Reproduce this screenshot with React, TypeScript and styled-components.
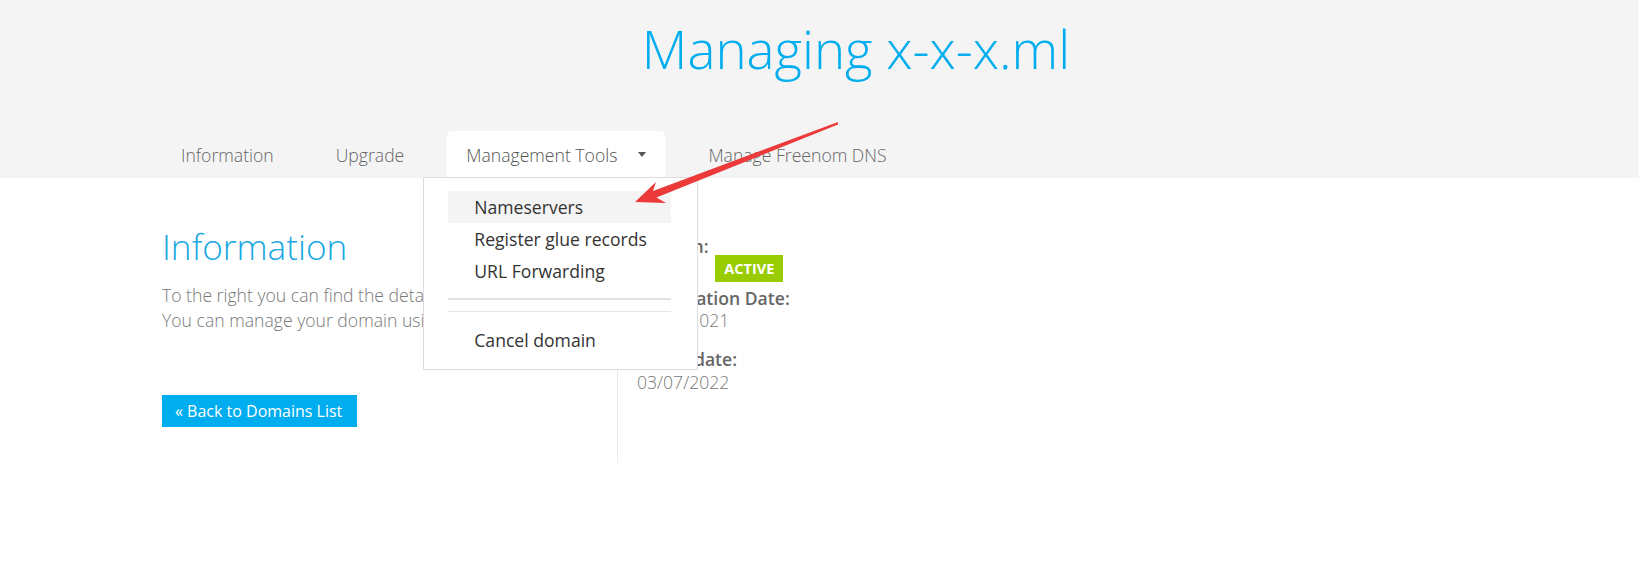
import React from "react";
import styled, { createGlobalStyle } from "styled-components";

const GlobalStyle = createGlobalStyle`
  html, body {
    margin: 0;
    padding: 0;
    background: #ffffff;
    font-family: "Open Sans", "Liberation Sans", sans-serif;
  }
  #root {
    position: relative;
    min-height: 572px;
  }
`;

const tabs = [
  { label: "Information" },
  { label: "Upgrade" },
  { label: "Management Tools", active: true, caret: true },
  { label: "Manage Freenom DNS" },
];

const menuItems = ["Nameservers", "Register glue records", "URL Forwarding"];

const App = (): React.ReactElement => {
  return (
    <>
      <GlobalStyle />
      <Header>
        <Container>
          <Title>Managing x-x-x.ml</Title>
          <Tabs>
            {tabs.map((tab) => (
              <Tab key={tab.label} $active={tab.active}>
                {tab.label}
                {tab.caret && <Caret />}
                {tab.active && (
                  <Dropdown>
                    {menuItems.map((item, index) => (
                      <MenuItem key={item} $hover={index === 0}>
                        {item}
                      </MenuItem>
                    ))}
                    <Divider $thick />
                    <Divider />
                    <MenuItem $spaced>Cancel domain</MenuItem>
                  </Dropdown>
                )}
              </Tab>
            ))}
          </Tabs>
        </Container>
      </Header>
      <Container>
        <Row>
          <LeftCol>
            <Heading>Information</Heading>
            <Text>
              To the right you can find the details of your domain.
              <br />
              You can manage your domain using the tabs above.
            </Text>
            <BackButton>« Back to Domains List</BackButton>
          </LeftCol>
          <RightCol>
            <Label>Domain:</Label>
            <DomainRow>
              <Value>x-x-x.ml</Value>
              <Badge>Active</Badge>
            </DomainRow>
            <Label $gap={6}>Registration Date:</Label>
            <Value>03/07/2021</Value>
            <Label $gap={18}>Expiry date:</Label>
            <Value $gap={1}>03/07/2022</Value>
          </RightCol>
        </Row>
      </Container>
      <Arrow viewBox="0 0 1639 572">
        <polygon
          points="838,122 653,191 656,182 635,202 666,203 656.5,197.5 838,124.5"
          fill="#ec3a3a"
        />
      </Arrow>
    </>
  );
};

const Header = styled.div`
  background: #f4f4f4;
  height: 178px;
`;

const Container = styled.div`
  width: 1388px;
  margin-left: 162px;
`;

const Title = styled.h1`
  margin: 0;
  padding-top: 13px;
  font-size: 52.8px;
  line-height: 72px;
  font-weight: 300;
  color: #00adef;
  text-align: center;
`;

const Tabs = styled.ul`
  list-style: none;
  margin: 46px 0 0;
  padding: 0;
  display: flex;
  gap: 24px;
`;

const Tab = styled.li<{ $active?: boolean }>`
  position: relative;
  display: flex;
  align-items: center;
  height: 47px;
  padding: 0 19px;
  font-size: 17.6px;
  font-weight: 300;
  color: ${(p) => (p.$active ? "#555" : "#666")};
  background: ${(p) => (p.$active ? "#ffffff" : "transparent")};
  border-radius: 5px 5px 0 0;
`;

const Caret = styled.span`
  margin-left: 21px;
  width: 0;
  height: 0;
  border-left: 4.5px solid transparent;
  border-right: 4.5px solid transparent;
  border-top: 5px solid #555;
`;

const Dropdown = styled.ul`
  position: absolute;
  left: -24px;
  top: 46px;
  width: 275px;
  margin: 0;
  padding: 13px 26px 13px 24px;
  box-sizing: border-box;
  list-style: none;
  background: #ffffff;
  border: 1px solid #dcdcdc;
  z-index: 2;
`;

const MenuItem = styled.li<{ $hover?: boolean; $spaced?: boolean }>`
  height: 32px;
  line-height: 32px;
  margin-top: ${(p) => (p.$spaced ? "12px" : "0")};
  padding-left: 26px;
  font-size: 17.6px;
  font-weight: 400;
  color: #333;
  background: ${(p) => (p.$hover ? "#f4f4f4" : "transparent")};
  white-space: nowrap;
`;

const Divider = styled.li<{ $thick?: boolean }>`
  margin: 11px 0 0;
  height: 0;
  border-top: ${(p) => (p.$thick ? "2px solid #e2e2e2" : "1px solid #e6e6e6")};
`;

const Row = styled.div`
  display: flex;
  margin-top: 37px;
  height: 248px;
`;

const LeftCol = styled.div`
  width: 455px;
  padding-top: 7px;
  border-right: 1px solid #ececec;
`;

const Heading = styled.h2`
  margin: 0;
  font-size: 35.2px;
  line-height: 48px;
  font-weight: 300;
  color: #17a8e3;
`;

const Text = styled.p`
  margin: 13px 0 0;
  font-size: 17.6px;
  line-height: 25px;
  font-weight: 300;
  color: #777;
  white-space: nowrap;
`;

const BackButton = styled.button`
  display: block;
  margin-top: 62px;
  width: 195px;
  height: 32px;
  padding: 0 0 0 13px;
  border: none;
  background: #00adef;
  color: #ffffff;
  font-family: inherit;
  font-size: 16px;
  text-align: left;
  cursor: pointer;
`;

const RightCol = styled.div`
  padding: 21px 0 0 19px;
`;

const Label = styled.div<{ $gap?: number }>`
  margin-top: ${(p) => p.$gap ?? 0}px;
  font-size: 17.6px;
  line-height: 21px;
  font-weight: 600;
  color: #666;
`;

const DomainRow = styled.div`
  display: flex;
  align-items: center;
  gap: 17px;
  margin-top: -2px;
  height: 27px;
`;

const Value = styled.div<{ $gap?: number }>`
  margin-top: ${(p) => p.$gap ?? 0}px;
  font-size: 17.6px;
  line-height: 22px;
  font-weight: 300;
  color: #777;
`;

const Badge = styled.span`
  display: inline-block;
  height: 27px;
  line-height: 27px;
  padding: 0 9px;
  background: #99cc00;
  color: #ffffff;
  font-size: 14.5px;
  font-weight: 700;
  text-transform: uppercase;
`;

const Arrow = styled.svg`
  position: absolute;
  top: 0;
  left: 0;
  width: 1639px;
  height: 572px;
  pointer-events: none;
  z-index: 3;
`;

export default App;
